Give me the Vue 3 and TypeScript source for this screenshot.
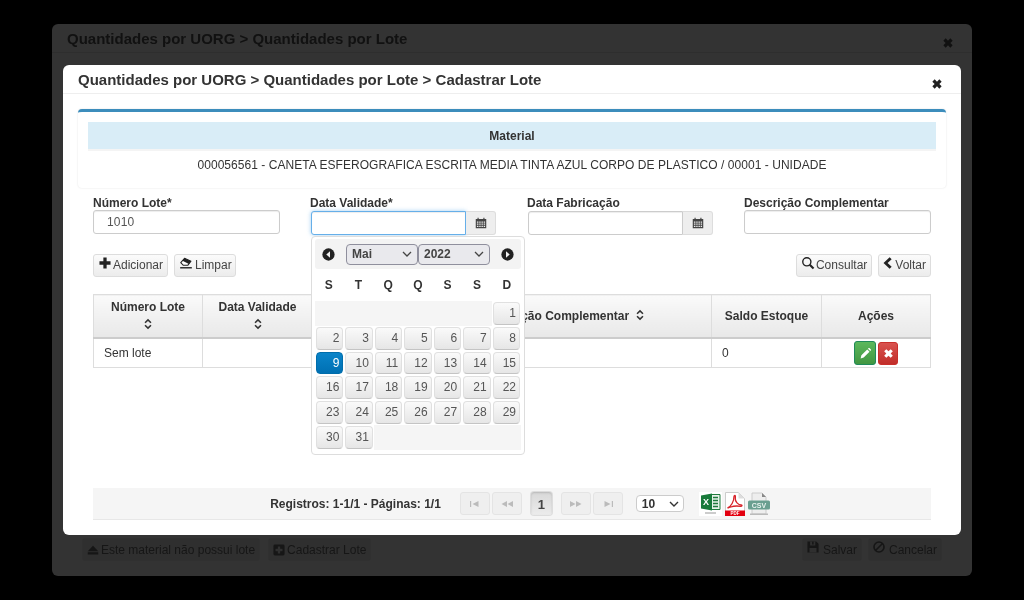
<script setup lang="ts">
const days: (number | null)[] = [
  ...Array(6).fill(null),
  ...Array.from({ length: 31 }, (_, i) => i + 1),
  ...Array(5).fill(null),
]
const weekdays = ['S', 'T', 'Q', 'Q', 'S', 'S', 'D']
const icons = {
  times: 'M4 8 8 4 12 8 16 4 20 8 16 12 20 16 16 20 12 16 8 20 4 16 8 12Z',
  plus: 'M9.2 2.5h5.6v6.7h6.7v5.6h-6.7v6.7H9.2v-6.7H2.5V9.2h6.7z',
  chevron: 'M16.5 2 20 5.5 13 12l7 6.5-3.5 3.5L6 12z',
  sort: 'M12 1.500 19 8.500 16.800 10.700 12 5.900 7.200 10.700 5 8.500zM12 22.500 5 15.500 7.200 13.300 12 18.100 16.800 13.300 19 15.500z',
  pencil: 'M3 21l1.400-5.600L15.200 4.600l4.200 4.200L8.600 19.600zM16.600 3.200l1.200-1.200a1 1 0 0 1 1.400 0l2.800 2.800a1 1 0 0 1 0 1.400l-1.200 1.200z',
  eject: 'M12 4.500 21 14H3zM3 16h18v3.500H3z',
  plusSquare: 'M5 2.500h14A2.500 2.500 0 0 1 21.500 5v14a2.500 2.500 0 0 1-2.500 2.500H5A2.500 2.500 0 0 1 2.500 19V5A2.500 2.500 0 0 1 5 2.500zM10 6v4H6v4h4v4h4v-4h4v-4h-4V6z',
  save: 'M2.500 2.500h15l4 4v15h-19zM7 3v6.500h9V3h-3v4.500h-2.500V3zM6 13.500v7.500h12v-7.500z',
  calendar: 'M3 5h3V3h2v2h8V3h2v2h3v16H3zM5 9.500v2h2.600v-2zm4 0v2h2.400v-2zm3.800 0v2h2.400v-2zm3.800 0v2H19v-2zM5 13v2h2.600v-2zm4 0v2h2.400v-2zm3.800 0v2h2.400v-2zm3.800 0v2H19v-2zM5 16.500V19h2.600v-2.500zm4 0V19h2.400v-2.500zm3.800 0V19h2.400v-2.500zm3.800 0V19H19v-2.500z',
}
</script>

<template>
  <div class="page">
    <section class="back-modal">
      <header class="back-head">
        <h2>Quantidades por UORG &gt; Quantidades por Lote</h2>
        <svg class="ico back-close" viewBox="0 0 24 24"><path :d="icons.times" /></svg>
      </header>
      <div class="back-body"></div>
      <footer class="back-foot">
        <div class="back-group wide">
          <button class="back-btn"><svg class="ico" viewBox="0 0 24 24"><path :d="icons.eject" /></svg>Este material não possui lote</button>
          <button class="back-btn"><svg class="ico" viewBox="0 0 24 24"><path fill-rule="evenodd" :d="icons.plusSquare" /></svg>Cadastrar Lote</button>
        </div>
        <div class="back-group">
          <button class="back-btn raised"><svg class="ico" viewBox="0 0 24 24"><path fill-rule="evenodd" :d="icons.save" /></svg>Salvar</button>
          <button class="back-btn raised"><svg class="ico" viewBox="0 0 24 24" fill="none" stroke="currentColor" stroke-width="2.800"><circle cx="12" cy="12" r="8.600" style="fill: none" /><path d="M6 18 18 6" style="fill: none" /></svg>Cancelar</button>
        </div>
      </footer>
    </section>

    <section class="modal">
      <header class="modal-head">
        <h2>Quantidades por UORG &gt; Quantidades por Lote &gt; Cadastrar Lote</h2>
        <svg class="ico modal-close" viewBox="0 0 24 24"><path :d="icons.times" /></svg>
      </header>

      <div class="modal-body">
        <div class="panel">
          <div class="panel-title">Material</div>
          <div class="panel-text">000056561 - CANETA ESFEROGRAFICA ESCRITA MEDIA TINTA AZUL CORPO DE PLASTICO / 00001 - UNIDADE</div>
        </div>

        <div class="form-row">
          <div class="field">
            <label>Número Lote*</label>
            <input class="input number" value="1010" />
          </div>
          <div class="field">
            <label>Data Validade*</label>
            <div class="input-group">
              <input class="input focused" />
              <span class="addon"><svg class="ico" viewBox="0 0 24 24"><path fill-rule="evenodd" :d="icons.calendar" /></svg></span>
            </div>

            <div class="calendar">
              <div class="cal-head">
                <svg class="cal-nav" viewBox="0 0 14 14"><circle cx="7" cy="7" r="6.600" /><path d="M8.600 3.600v6.800L4.600 7z" fill="#f3f3f3" /></svg>
                <div class="cal-selects">
                  <select class="cal-select"><option>Mai</option></select>
                  <select class="cal-select"><option>2022</option></select>
                </div>
                <svg class="cal-nav" viewBox="0 0 14 14"><circle cx="7" cy="7" r="6.600" /><path d="M5.400 3.600v6.800L9.400 7z" fill="#f3f3f3" /></svg>
              </div>
              <div class="cal-week">
                <span v-for="(d, i) in weekdays" :key="i">{{ d }}</span>
              </div>
              <div class="cal-grid">
                <div v-for="(d, i) in days" :key="i" class="cal-cell" :class="{ blank: d === null }">
                  <a v-if="d !== null" class="day" :class="{ today: d === 9 }">{{ d }}</a>
                </div>
              </div>
            </div>
          </div>
          <div class="field">
            <label>Data Fabricação</label>
            <div class="input-group">
              <input class="input" />
              <span class="addon"><svg class="ico" viewBox="0 0 24 24"><path fill-rule="evenodd" :d="icons.calendar" /></svg></span>
            </div>
          </div>
          <div class="field">
            <label>Descrição Complementar</label>
            <input class="input plain" />
          </div>
        </div>

        <div class="actions">
          <div class="btn-group">
            <button class="btn"><svg class="ico big" viewBox="0 0 24 24"><path :d="icons.plus" /></svg>Adicionar</button>
            <button class="btn wide-gap"><svg class="ico big" viewBox="0 0 24 24"><path d="M3 11.500 9.500 4l11 5-5.500 7H7.500z" fill="#fff" stroke="currentColor" stroke-width="1.800" stroke-linejoin="round" /><path d="M9.500 4l11 5-3.500 4.500L6 8z" /><rect x="2" y="19" width="20" height="2.400" /></svg>Limpar</button>
          </div>
          <div class="btn-group">
            <button class="btn"><svg class="ico big" viewBox="0 0 24 24"><circle cx="10" cy="10" r="7" style="fill: none" stroke="currentColor" stroke-width="2.400" /><path d="M15 15l6.500 6.500" stroke="currentColor" stroke-width="3.600" /></svg>Consultar</button>
            <button class="btn tight"><svg class="ico big" viewBox="0 0 24 24"><path :d="icons.chevron" /></svg>Voltar</button>
          </div>
        </div>

        <table class="table">
          <colgroup>
            <col style="width: 109px" /><col style="width: 110px" /><col style="width: 106px" />
            <col style="width: 293px" /><col style="width: 110px" /><col style="width: 109px" />
          </colgroup>
          <thead>
            <tr>
              <th class="two">Número Lote<br /><svg class="ico sort" viewBox="0 0 24 24"><path :d="icons.sort" /></svg></th>
              <th class="two">Data Validade<br /><svg class="ico sort" viewBox="0 0 24 24"><path :d="icons.sort" /></svg></th>
              <th class="two">Data Fabricação<br /><svg class="ico sort" viewBox="0 0 24 24"><path :d="icons.sort" /></svg></th>
              <th>Descrição Complementar <svg class="ico sort inline" viewBox="0 0 24 24"><path :d="icons.sort" /></svg></th>
              <th>Saldo Estoque</th>
              <th>Ações</th>
            </tr>
          </thead>
          <tbody>
            <tr>
              <td>Sem lote</td>
              <td></td>
              <td></td>
              <td></td>
              <td>0</td>
              <td class="row-actions">
                <button class="mini green"><svg class="ico" viewBox="0 0 24 24"><path :d="icons.pencil" /></svg></button>
                <button class="mini red"><svg class="ico" viewBox="0 0 24 24"><path :d="icons.times" /></svg></button>
              </td>
            </tr>
          </tbody>
        </table>

        <div class="pager">
          <span class="pager-text">Registros: 1-1/1 - Páginas: 1/1</span>
          <div class="pager-set first">
            <span class="pg"><svg viewBox="0 0 12 8"><path d="M1 1h1.200v6H1zM9.500 1v6L3.500 4z" /></svg></span>
            <span class="pg"><svg viewBox="0 0 12 8"><path d="M6 1v6L.5 4zM12 1v6L6.500 4z" /></svg></span>
          </div>
          <span class="pg-active">1</span>
          <div class="pager-set">
            <span class="pg"><svg viewBox="0 0 12 8"><path d="M0 1v6l5.500-3zM6 1v6l5.500-3z" /></svg></span>
            <span class="pg"><svg viewBox="0 0 12 8"><path d="M2.500 1v6l6-3zM9.800 1H11v6H9.800z" /></svg></span>
          </div>
          <select class="pg-select"><option>10</option></select>
          <div class="exports">
            <svg class="excel" width="23" height="24" viewBox="0 0 23 24">
              <rect width="23" height="24" fill="#fff" />
              <path d="M11 2.500h10v15H11z" fill="#e8f3ea" stroke="#1f7a3d" />
              <path d="M14 5.500h5M14 8.500h5M14 11.500h5M14 14.500h5" stroke="#1f7a3d" stroke-width="1.600" />
              <path d="M2 3.500 13 1.500v17L2 16.500z" fill="#187a3a" />
              <text x="4" y="13" font-size="9" font-weight="700" fill="#fff" font-family="Liberation Sans">X</text>
              <rect x="6" y="20.500" width="11" height="1" fill="#999" />
            </svg>
            <svg class="pdf" width="20" height="24" viewBox="0 0 20 24">
              <path d="M.5.500h13l6 6v17H.5z" fill="#fff" stroke="#ccc" />
              <path d="M13.500.5v6h6z" fill="#ddd" />
              <path d="M3 15.500c3-1 6-6 6-11 0 0 .2-1 .8-1s.7 1 .5 2.500c-.5 3.500 3 7 6 7 1 0 1 1.500-.5 1.300-3-.4-7-.5-10 .7-2 .8-3.300 1.300-2.800.5z" fill="none" stroke="#d8232a" stroke-width="1.300" />
              <rect y="18.500" width="20" height="5.500" fill="#e3000f" />
              <text x="10" y="23" text-anchor="middle" font-size="4.500" font-weight="700" fill="#fff" font-family="Liberation Sans">PDF</text>
            </svg>
            <svg class="csv" width="22" height="24" viewBox="0 0 22 24">
              <path d="M4 1h10l4 4v17H4z" fill="#eee" stroke="#ccc" />
              <path d="M14 1v4h4z" fill="#888" />
              <rect y="8.500" width="22" height="9" rx="1.500" fill="#6a9f90" />
              <text x="11" y="15.500" text-anchor="middle" font-size="7" font-weight="700" fill="#e8f2ee" font-family="Liberation Sans">CSV</text>
              <rect x="2" y="21.500" width="18" height="1.500" fill="#bbb" />
            </svg>
          </div>
        </div>
      </div>
    </section>
  </div>
</template>

<style>
html,
body {
  background: #000;
}
</style>

<style scoped>
.page {
  position: relative;
  width: 1024px;
  height: 600px;
  padding: 24px 52px;
  box-sizing: border-box;
  background: #000;
  font-family: "Liberation Sans", Arial, sans-serif;
  font-size: 12px;
  color: #333;
  overflow: hidden;
}
button {
  font-family: inherit;
  margin: 0;
}
h2 {
  margin: 0;
  font-size: 15px;
  font-weight: 700;
  line-height: 18px;
}
.ico {
  display: inline-block;
  fill: currentColor;
  flex: none;
}

/* dimmed window behind */
.back-modal {
  display: flex;
  flex-direction: column;
  height: 552px;
  background: #333;
  border-radius: 6px;
  color: #111;
  will-change: transform;
}
.back-head {
  position: relative;
  height: 22px;
  padding: 6px 15px 0;
  box-sizing: content-box;
  border-bottom: 1px solid #2e2e2e;
}
.back-close {
  position: absolute;
  right: 17px;
  top: 12px;
  width: 14px;
  height: 14px;
}
.back-body {
  flex: 1;
}
.back-foot {
  display: flex;
  justify-content: space-between;
  padding: 0 30px 15px;
}
.back-group {
  display: flex;
  gap: 6px;
}
.back-group.wide {
  gap: 8px;
}
.back-btn {
  display: flex;
  align-items: center;
  gap: 1px;
  height: 23px;
  padding: 0 4px 0 3px;
  background: #2f2f2f;
  border: 1px solid #303030;
  border-radius: 3px;
  font-size: 12px;
  color: #161616;
}
.back-btn .ico {
  width: 14px;
  height: 14px;
}
.back-btn.raised {
  gap: 3px;
}
.back-btn.raised .ico {
  align-self: flex-start;
  margin-top: 1px;
}

/* top window */
.modal {
  position: absolute;
  left: 63px;
  top: 65px;
  width: 898px;
  height: 470px;
  background: #fff;
  border-radius: 6px;
  will-change: transform;
}
.modal-head {
  position: relative;
  height: 29px;
  padding-left: 15px;
  padding-top: 6px;
  box-sizing: border-box;
  border-bottom: 1px solid #eee;
  color: #333;
}
.modal-close {
  position: absolute;
  right: 17px;
  top: 12px;
  width: 14px;
  height: 14px;
  color: #222;
}
.modal-body {
  padding: 15px 15px 0;
}
.panel {
  height: 79px;
  box-sizing: border-box;
  padding: 10px 10px 0;
  border-top: 3px solid #3c8dbc;
  border-radius: 4px;
  box-shadow: 0 0 2px rgba(0, 0, 0, 0.12);
  background: #fff;
}
.panel-title {
  height: 27px;
  line-height: 28px;
  text-align: center;
  font-weight: 700;
  background: #d9edf7;
  border-bottom: 2px solid #f4f4f4;
  box-sizing: content-box;
}
.panel-text {
  margin-top: 7px;
  text-align: center;
  line-height: 14px;
  letter-spacing: 0.045px;
  color: #333;
}

.form-row {
  display: grid;
  grid-template-columns: repeat(4, 1fr);
  margin-top: 8px;
}
.field {
  position: relative;
  padding: 0 15px;
}
.field label {
  display: block;
  height: 15px;
  line-height: 14px;
  font-weight: 700;
}
.input {
  display: block;
  width: 100%;
  height: 24px;
  box-sizing: border-box;
  padding: 0 13px;
  border: 1px solid #ccc;
  border-radius: 3px;
  font-family: inherit;
  font-size: 12px;
  color: #555;
  background: #fff;
  box-shadow: inset 0 1px 1px rgba(0, 0, 0, 0.075);
  outline: none;
}
.number,
.plain {
  margin-top: -1px;
}
.number {
  letter-spacing: 0.2px;
}
.focused {
  border-color: #66afe9;
  box-shadow: inset 0 1px 1px rgba(0, 0, 0, 0.075), 0 0 4px rgba(102, 175, 233, 0.6);
}
.input-group {
  display: flex;
  margin: 0 1px;
}
.input-group .input {
  flex: 1;
  min-width: 0;
  border-radius: 3px 0 0 3px;
}
.addon {
  display: flex;
  align-items: center;
  justify-content: center;
  width: 30px;
  height: 24px;
  box-sizing: border-box;
  background: #eee;
  border: 1px solid #ddd;
  border-left: 0;
  border-radius: 0 3px 3px 0;
  color: #444;
}
.addon .ico {
  width: 14px;
  height: 14px;
}

.calendar {
  position: absolute;
  left: 16px;
  top: 40px;
  z-index: 5;
  width: 214px;
  height: 219px;
  box-sizing: border-box;
  padding: 2px 3px 3px;
  background: #fff;
  border: 1px solid #ddd;
  border-radius: 4px;
}
.cal-head {
  display: flex;
  align-items: center;
  justify-content: space-between;
  height: 30px;
  padding: 0 7px;
  background: #f3f3f3;
  border-radius: 3px;
}
.cal-nav {
  width: 13px;
  height: 13px;
  fill: #222;
}
.cal-selects {
  display: flex;
}
.cal-select {
  width: 72px;
  height: 21px;
  box-sizing: border-box;
  padding: 0 0 0 5px;
  appearance: none;
  background: #e9e9ed url("data:image/svg+xml,%3Csvg xmlns='http://www.w3.org/2000/svg' width='10' height='6'%3E%3Cpath d='M1 1l4 4 4-4' fill='none' stroke='%23444' stroke-width='1.300'/%3E%3C/svg%3E") no-repeat right 5px center;
  border: 1px solid #8f8f9d;
  border-radius: 4px;
  font-family: inherit;
  font-size: 12px;
  font-weight: 700;
  color: #444;
}
.cal-week {
  display: grid;
  grid-template-columns: repeat(7, 29.67px);
  height: 32px;
  margin: 0 -1px;
  align-items: center;
  text-align: center;
  font-weight: 700;
  color: #333;
}
.cal-grid {
  display: grid;
  grid-template-columns: repeat(7, 1fr);
  grid-auto-rows: 24.8px;
}
.cal-cell {
  padding: 1px;
  box-sizing: border-box;
}
.blank {
  background: #f5f5f5;
  padding: 0;
}
.day {
  display: block;
  height: 100%;
  box-sizing: border-box;
  padding-right: 3px;
  text-align: right;
  line-height: 21px;
  font-size: 12px;
  color: #555;
  background: linear-gradient(#fafafa, #e6e6e6);
  border: 1px solid #e0e0e0;
  border-bottom-color: #c4c4c4;
  border-radius: 4px;
}
.today {
  color: #fff;
  background: linear-gradient(#0a84c9, #0070b3);
  border-color: #006dab;
}

.actions {
  display: flex;
  justify-content: space-between;
  margin-top: 19px;
  padding: 0 15px;
}
.btn-group {
  display: flex;
  gap: 6px;
}
.btn {
  display: flex;
  align-items: center;
  gap: 1px;
  height: 23px;
  padding: 0 4px 2px;
  background: linear-gradient(#fbfbfb, #ececec);
  border: 1px solid #ddd;
  border-radius: 3px;
  font-size: 12px;
  color: #444;
}
.btn.wide-gap {
  gap: 2px;
  padding-right: 3px;
}
.btn.tight {
  padding: 0 4px 2px 1px;
}
.btn .big {
  width: 14px;
  height: 14px;
  align-self: flex-start;
  margin-top: 1px;
  color: #222;
}

.table {
  width: 837px;
  margin: 17px 15px 0;
  table-layout: fixed;
  border-collapse: collapse;
}
.table th,
.table td {
  border: 1px solid #ddd;
  overflow: hidden;
  white-space: nowrap;
}
.table th {
  height: 42px;
  padding: 0;
  text-align: center;
  vertical-align: middle;
  font-weight: 700;
  line-height: 15px;
  color: #333;
  background: linear-gradient(#fafafa, #e8e8e8);
  border-bottom: 2px solid #ccc;
}
.table th.two {
  height: 40px;
  padding-top: 2px;
}
.table td {
  height: 28px;
  padding: 0 10px;
  color: #333;
}
.sort {
  width: 12px;
  height: 12px;
  margin-top: 3px;
}
.sort.inline {
  margin-top: 0;
  vertical-align: -1px;
  margin-left: 1px;
}
.table .row-actions {
  padding: 0;
  text-align: center;
  font-size: 0;
}
.mini {
  display: inline-flex;
  align-items: center;
  justify-content: center;
  height: 24px;
  padding: 0;
  border-radius: 3px;
  color: #fff;
  vertical-align: middle;
}
.mini .ico {
  width: 13px;
  height: 13px;
}
.green {
  width: 22px;
  background: linear-gradient(#5cb85c, #419641);
  border: 1px solid #1f8a5a;
}
.red {
  width: 20px;
  height: 23px;
  margin-left: 2px;
  background: linear-gradient(#d9534f, #c12e2a);
  border: 1px solid #c9302c;
}

.pager {
  display: flex;
  align-items: center;
  justify-content: center;
  height: 32px;
  box-sizing: border-box;
  margin: 120px 15px 0;
  padding-left: 16px;
  background: #f5f5f5;
  border-bottom: 1px solid #e7e7e7;
}
.pager-text {
  font-weight: 700;
  color: #333;
  margin-right: 19px;
}
.pager-set {
  display: flex;
  gap: 2px;
}
.pg {
  display: flex;
  align-items: center;
  justify-content: center;
  width: 30px;
  height: 23px;
  box-sizing: border-box;
  background: #efefef;
  border: 1px solid #e4e4e4;
  border-radius: 3px;
}
.pg svg {
  width: 12px;
  height: 8px;
  fill: #bbb;
}
.pg-active {
  width: 21px;
  height: 23px;
  line-height: 25px;
  margin: 0 9px;
  text-align: center;
  font-size: 13px;
  font-weight: 700;
  color: #444;
  background: linear-gradient(#d8d8d8, #ececec);
  border-radius: 3px;
  box-shadow: inset 0 1px 2px rgba(0, 0, 0, 0.15), 0 0 0 1px #ddd;
}
.pg-select {
  width: 48px;
  height: 17px;
  margin-left: 13px;
  padding: 0 0 0 5px;
  appearance: none;
  background: #fff url("data:image/svg+xml,%3Csvg xmlns='http://www.w3.org/2000/svg' width='10' height='6'%3E%3Cpath d='M1 1l4 4 4-4' fill='none' stroke='%23333' stroke-width='1.400'/%3E%3C/svg%3E") no-repeat right 4px center;
  border: 1px solid #ccc;
  border-radius: 4px;
  font-family: inherit;
  font-size: 12px;
  font-weight: 700;
  color: #333;
}
.exports {
  display: flex;
  align-items: center;
  gap: 3px;
  margin-left: 15px;
}
</style>
